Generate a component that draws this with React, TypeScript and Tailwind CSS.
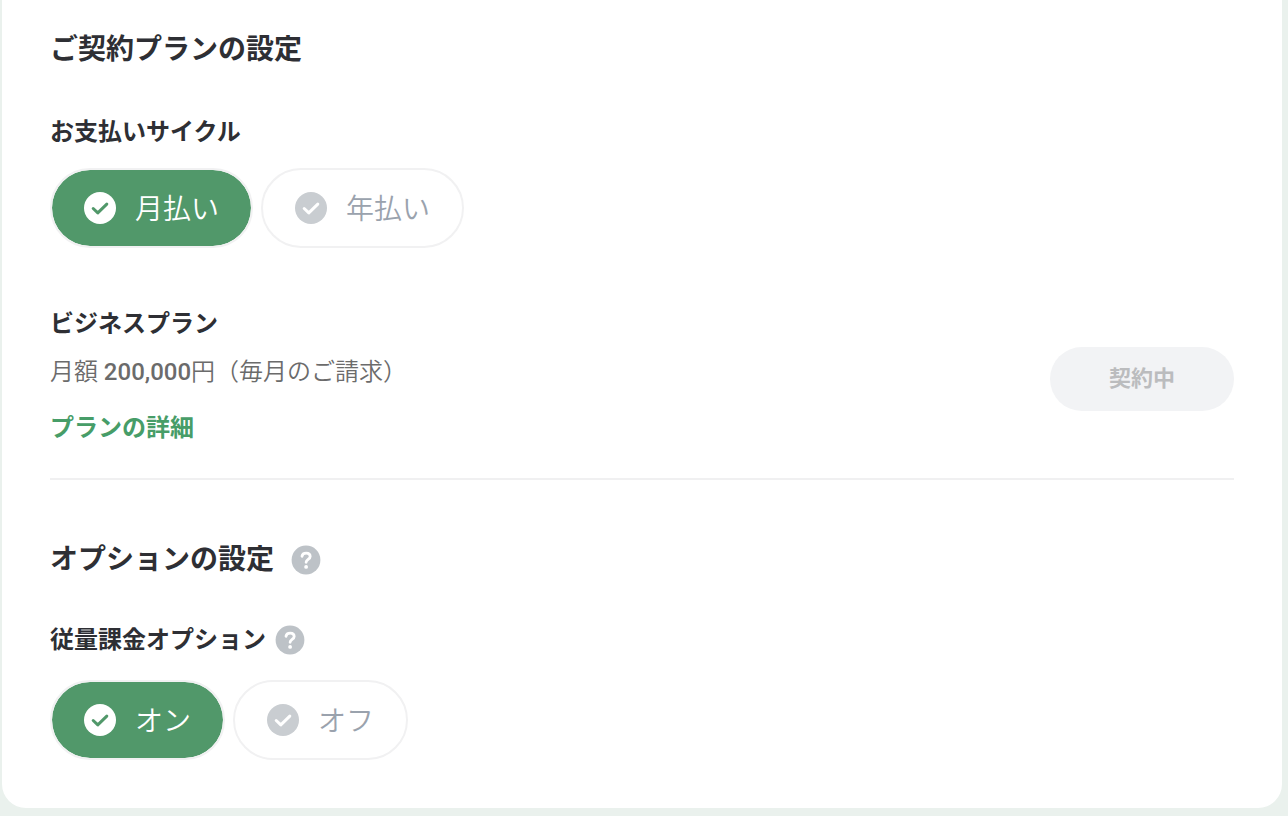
import { useState } from "react";

type Choice = { value: string; label: string };

const cycles: Choice[] = [
  { value: "monthly", label: "月払い" },
  { value: "yearly", label: "年払い" },
];

const switches: Choice[] = [
  { value: "on", label: "オン" },
  { value: "off", label: "オフ" },
];

function CheckIcon() {
  return (
    <svg viewBox="0 0 32 32" className="h-8 w-8 shrink-0" fill="none" aria-hidden="true">
      <circle cx="16" cy="16" r="16" fill="currentColor" />
      <path
        d="M9.2 16.5L13.8 20.8L22.8 12.1"
        className="stroke-white group-has-checked:stroke-[#51986a]"
        strokeWidth="3"
        strokeLinecap="round"
        strokeLinejoin="round"
      />
    </svg>
  );
}

function HelpButton({ label }: { label: string }) {
  return (
    <button type="button" aria-label={label} className="h-7 w-7 text-[#bdc2c7]">
      <svg viewBox="0 0 28 28" className="h-7 w-7 overflow-visible" fill="none" aria-hidden="true">
        <circle cx="14" cy="14" r="14.4" fill="currentColor" />
        <path
          d="M10 10.3C10.3 8.2 12 7.2 14.2 7.2C16.6 7.2 18.2 8.5 18.2 10.5C18.2 13.3 14.1 13.5 14.1 16.3"
          stroke="#fff"
          strokeWidth="2.8"
          strokeLinecap="round"
          strokeLinejoin="round"
        />
        <circle cx="14.1" cy="20.9" r="1.9" fill="#fff" />
      </svg>
    </button>
  );
}

function PillGroup({ name, labelledBy, choices }: { name: string; labelledBy: string; choices: Choice[] }) {
  const [selected, setSelected] = useState(choices[0].value);

  return (
    <div role="radiogroup" aria-labelledby={labelledBy} className="flex flex-wrap gap-2">
      {choices.map((choice) => (
        <label
          key={choice.value}
          className="group relative flex h-20 cursor-pointer items-center gap-[19px] rounded-full border-2 border-[#f1f1f2] bg-white bg-clip-padding px-8 text-[#c9cdd1] has-checked:bg-[#51986a] has-checked:text-white"
        >
          <input
            type="radio"
            name={name}
            value={choice.value}
            checked={selected === choice.value}
            onChange={() => setSelected(choice.value)}
            className="sr-only"
          />
          <CheckIcon />
          <span className="pt-1 text-[28px] leading-10 font-[350] text-[#9aa2ad] group-has-checked:text-white">
            {choice.label}
          </span>
        </label>
      ))}
    </div>
  );
}

export default function App() {
  return (
    <div className="min-h-screen bg-[#eaf1ed] pr-1.5 pb-2 pl-0.5 font-['Roboto','Noto_Sans_CJK_JP',sans-serif] text-[#2e2f34]">
      <main className="rounded-b-3xl bg-white px-12 pt-[30px] pb-12">
        <section>
          <h2 className="text-[28px] leading-10 font-bold">ご契約プランの設定</h2>

          <h3 id="cycle-label" className="mt-11 mb-[18px] text-2xl leading-9 font-bold">
            お支払いサイクル
          </h3>
          <PillGroup name="cycle" labelledBy="cycle-label" choices={cycles} />

          <div className="mt-[58px] flex items-center justify-between border-b-2 border-[#f0f0f1] pb-6.5">
            <div className="pb-1.5">
              <h3 className="text-2xl leading-9 font-bold">ビジネスプラン</h3>
              <p className="mt-3 text-2xl leading-9 font-[350] text-[#6b6b6b]">
                月額 <span className="font-medium">200,000</span>円（毎月のご請求）
              </p>
              <a href="#plan" className="mt-5 inline-block text-2xl leading-9 font-bold text-[#479d68]">
                プランの詳細
              </a>
            </div>
            <button
              type="button"
              disabled
              className="h-16 w-46 shrink-0 rounded-full bg-[#f2f3f5] text-[22px] leading-8 font-bold text-[#bbbcbe]"
            >
              契約中
            </button>
          </div>
        </section>

        <section className="mt-15">
          <div className="flex items-center gap-[18px]">
            <h2 className="text-[28px] leading-10 font-bold">オプションの設定</h2>
            <HelpButton label="オプションの設定について" />
          </div>

          <div className="mt-[42px] mb-[22px] flex items-center gap-2.5">
            <h3 id="metered-label" className="text-2xl leading-9 font-bold">
              従量課金オプション
            </h3>
            <HelpButton label="従量課金オプションについて" />
          </div>
          <PillGroup name="metered" labelledBy="metered-label" choices={switches} />
        </section>
      </main>
    </div>
  );
}
